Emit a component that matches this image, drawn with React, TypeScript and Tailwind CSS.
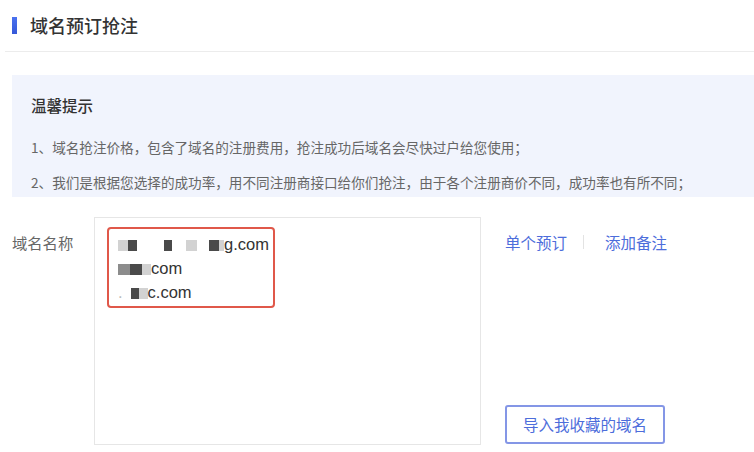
import React from 'react';

const cjk = { fontFamily: '"Noto Sans CJK SC", "Noto Sans", sans-serif' };
const latin = { fontFamily: '"Liberation Sans", "Noto Sans CJK SC", sans-serif' };

// mosaic blocks that hide parts of the domain names
function Blk({ w, tone }: { w: number; tone: 'dark' | 'mid' | 'light' | 'none' }) {
  const bg =
    tone === 'dark' ? 'bg-[#4a4a4a]' : tone === 'mid' ? 'bg-[#8c8c8c]' : tone === 'light' ? 'bg-[#d2d2d2]' : 'bg-transparent';
  return <span className={`inline-block h-[11px] align-[-1px] ${bg}`} style={{ width: w }} />;
}

export default function App() {
  return (
    <div className="w-[754px] h-[452px] overflow-hidden bg-white" style={cjk}>
      {/* header */}
      <div className="ml-[5px] h-[52px] border-b border-[#ececec] flex items-center pl-[7px]">
        <span className="w-[5px] h-[17px] bg-gradient-to-b from-[#4a72f0] to-[#3558d8]" />
        <span className="ml-[13px] text-[18px] font-medium text-[#333]">域名预订抢注</span>
      </div>

      {/* tips */}
      <div className="mt-[23px] ml-[12px] h-[122px] bg-[#f1f4fd] pl-[19px] pt-[19px]">
        <div className="text-[15.5px] leading-[22px] text-[#333] font-medium">温馨提示</div>
        <div className="mt-[21px] text-[13.6px] leading-[20px] text-[#666]">
          1、域名抢注价格，包含了域名的注册费用，抢注成功后域名会尽快过户给您使用；
        </div>
        <div className="mt-[15px] text-[13.6px] leading-[20px] text-[#666]">
          2、我们是根据您选择的成功率，用不同注册商接口给你们抢注，由于各个注册商价不同，成功率也有所不同；
        </div>
      </div>

      {/* form row */}
      <div className="mt-[20px] flex">
        <div className="w-[94px] pl-[12px] pt-[15px] text-[15.3px] leading-[20px] text-[#666]">域名名称</div>
        <div className="w-[387px] h-[228px] border border-[#e6e6e6] pl-[12px] pt-[9px]">
          <div className="w-[168px] border-2 border-[#e0584a] rounded-[4px] pl-[9px] pt-[3px] pb-[2px] text-[16.5px] leading-[24px] text-[#333]" style={latin}>
            <div className="whitespace-nowrap">
              <Blk w={10} tone="light" />
              <Blk w={9} tone="dark" />
              <Blk w={27} tone="none" />
              <Blk w={8} tone="dark" />
              <Blk w={14} tone="none" />
              <Blk w={11} tone="light" />
              <Blk w={12} tone="none" />
              <Blk w={10} tone="dark" />
              <Blk w={5} tone="light" />
              g.com
            </div>
            <div className="whitespace-nowrap">
              <Blk w={12} tone="mid" />
              <Blk w={12} tone="dark" />
              <Blk w={9} tone="light" />
              com
            </div>
            <div className="whitespace-nowrap">
              <span className="text-[#bbb]">.</span>
              <Blk w={8} tone="none" />
              <Blk w={8} tone="dark" />
              <Blk w={9} tone="light" />
              c.com
            </div>
          </div>
        </div>
        <div className="ml-[24px] flex flex-col justify-between h-[228px]">
          <div className="pt-[15px] flex items-center text-[15.5px] leading-[20px] text-[#4d6ddb]">
            <span>单个预订</span>
            <span className="ml-[16px] mr-[21px] w-px h-[14px] bg-[#e3e3e3]" />
            <span>添加备注</span>
          </div>
          <button className="w-[160px] h-[39px] mb-[1px] border-2 border-[#8496e6] rounded-[3px] text-[15.5px] text-[#4d6ddb] bg-white">
            导入我收藏的域名
          </button>
        </div>
      </div>
    </div>
  );
}
